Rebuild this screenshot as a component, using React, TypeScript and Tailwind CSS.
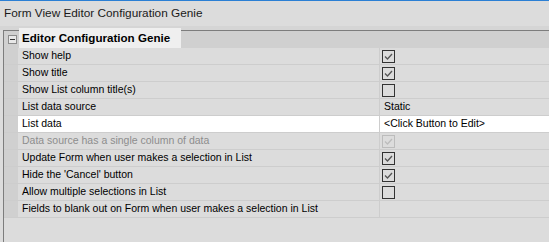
import React from 'react';

type Row = {
  label: string;
  value?: string;
  check?: boolean;
  disabled?: boolean;
  selected?: boolean;
};

const rows: Row[] = [
  { label: 'Show help', check: true },
  { label: 'Show title', check: true },
  { label: 'Show List column title(s)', check: false },
  { label: 'List data source', value: 'Static' },
  { label: 'List data', value: '<Click Button to Edit>', selected: true },
  { label: 'Data source has a single column of data', check: true, disabled: true },
  { label: 'Update Form when user makes a selection in List', check: true },
  { label: "Hide the 'Cancel' button", check: true },
  { label: 'Allow multiple selections in List', check: false },
  { label: 'Fields to blank out on Form when user makes a selection in List', value: '' },
];

function CheckBox({ checked, disabled }: { checked: boolean; disabled?: boolean }) {
  const border = disabled ? 'border-[#bcbcbc]' : 'border-[#333333]';
  return (
    <div className={`w-[13px] h-[13px] border ${border} flex items-center justify-center`}>
      {checked && (
        <svg width="11" height="11" viewBox="0 0 11 11">
          <path
            d="M2 5.5 L4.5 8 L9 3"
            fill="none"
            stroke={disabled ? '#bcbcbc' : '#555555'}
            strokeWidth="1.3"
          />
        </svg>
      )}
    </div>
  );
}

export default function App() {
  return (
    <div
      className="w-[549px] h-[242px] bg-[#dcdcdc] overflow-hidden flex flex-col text-black"
      style={{ fontFamily: '"Liberation Sans", Arial, sans-serif' }}
    >
      <div className="h-px bg-[#2b7fd4]" />
      <div className="h-[25px] pl-[4px] flex items-center text-[11.8px] text-[#1a1a1a]">
        Form View Editor Configuration Genie
      </div>
      <div className="h-[4px] bg-[#d5d5d5]" />
      <div className="flex-1 ml-[3px] border-l border-t border-[#7d7d7d] flex flex-col">
        {/* category header */}
        <div className="h-[17px] bg-[#d0d0d0] flex items-center">
          <div className="w-[15px] flex justify-center pl-[1px]">
            <div className="w-[9px] h-[9px] border border-[#8c8c8c] bg-[#e8e8e8] flex items-center justify-center">
              <div className="w-[5px] h-px bg-[#333]" />
            </div>
          </div>
          <div className="relative -mt-[3px] h-[20px] w-[162px] bg-[#efefef] flex items-center pl-[3px] text-[11.6px] font-bold">
            Editor Configuration Genie
          </div>
        </div>
        {rows.map((r) => (
          <div key={r.label} className="h-[17px] flex border-b border-[#cdcdcd]">
            <div className="w-[14px] bg-[#d0d0d0]" />
            <div
              className={`w-[362px] pl-[4px] flex items-center text-[10.5px] whitespace-nowrap overflow-hidden border-r border-[#cdcdcd] ${
                r.selected ? 'bg-white' : 'bg-[#dcdcdc]'
              } ${r.disabled ? 'text-[#8d8d8d]' : 'text-black'}`}
            >
              {r.label}
            </div>
            <div
              className={`flex-1 pl-[2px] flex items-center text-[10.5px] ${
                r.selected ? 'bg-white' : 'bg-[#dcdcdc]'
              }`}
            >
              {r.check !== undefined ? (
                <CheckBox checked={r.check} disabled={r.disabled} />
              ) : (
                <span className="pl-[2px]">{r.value}</span>
              )}
            </div>
          </div>
        ))}
      </div>
    </div>
  );
}
